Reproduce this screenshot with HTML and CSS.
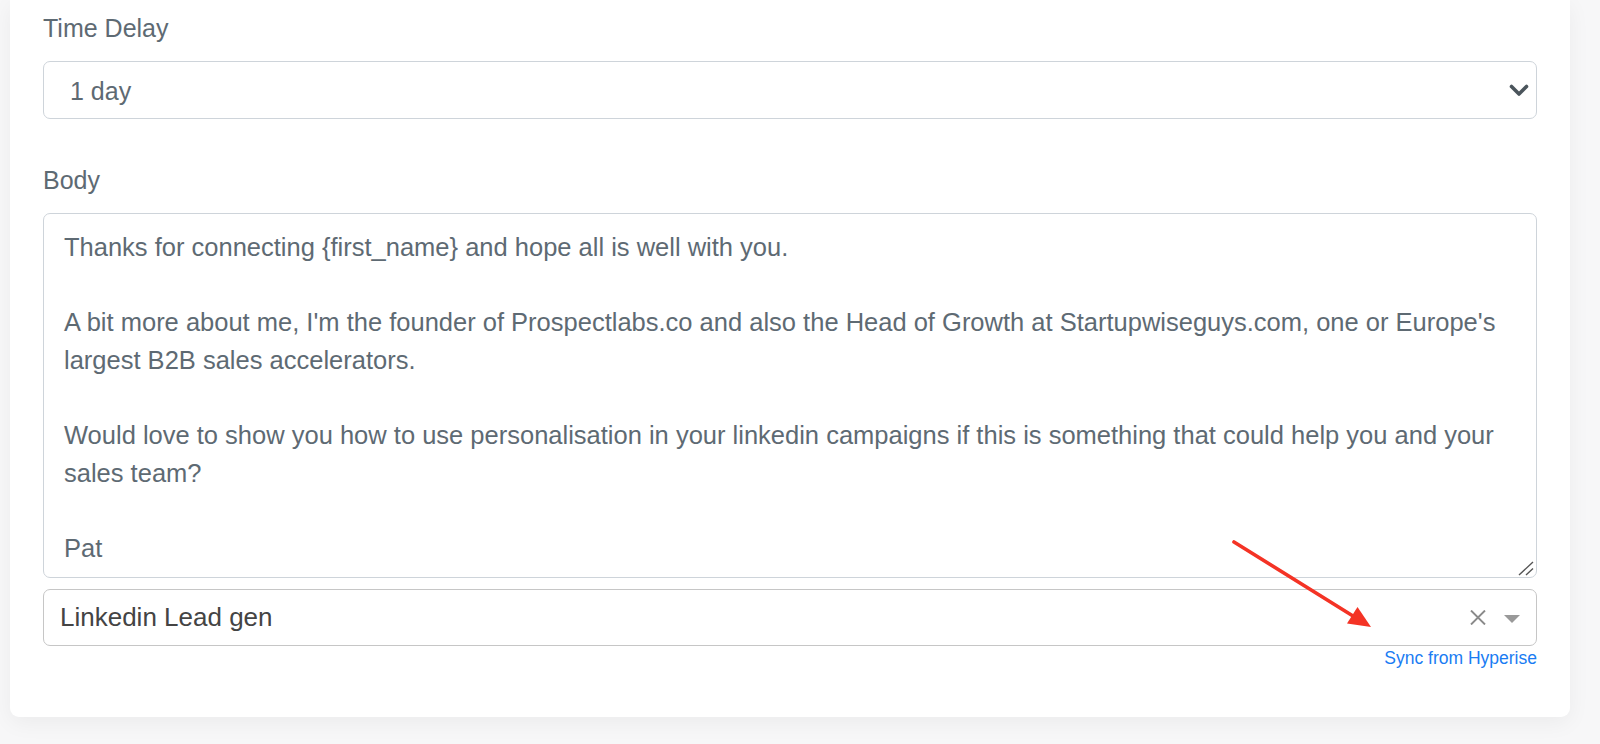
FILE: index.html
```html
<!DOCTYPE html>
<html lang="en">
<head>
<meta charset="utf-8">
<title>Step editor</title>
<link rel="stylesheet" href="styles.css">
</head>
<body>
<div class="page">
  <div class="card">
    <div class="field">
      <label class="label">Time Delay</label>
      <div class="select">
        <span class="select-value">1 day</span>
        <svg class="chevron" width="20" height="13" viewBox="0 0 20 13"><path d="M2.5 2.5 L10 10 L17.5 2.5" fill="none" stroke="#4b555c" stroke-width="3.6" stroke-linecap="round" stroke-linejoin="round"/></svg>
      </div>
    </div>
    <div class="field body-field">
      <label class="label">Body</label>
      <div class="textarea">
        <div class="textarea-text">Thanks for connecting {first_name} and hope all is well with you.

A bit more about me, I'm the founder of Prospectlabs.co and also the Head of Growth at Startupwiseguys.com, one or Europe's largest B2B sales accelerators.

Would love to show you how to use personalisation in your linkedin campaigns if this is something that could help you and your sales team?

Pat</div>
        <svg class="grip" width="16" height="15" viewBox="0 0 16 15"><path d="M1 14 L15 1 M8 14 L15 7.5" stroke="#555" stroke-width="1.4" fill="none"/></svg>
      </div>
      <div class="select2">
        <span class="select2-value">Linkedin Lead gen</span>
        <span class="select2-actions">
          <svg class="clear" width="16" height="15" viewBox="0 0 16 15"><path d="M1 0.5 L15 14.5 M15 0.5 L1 14.5" stroke="#8a8a8a" stroke-width="1.9" fill="none"/></svg>
          <svg class="caret" width="16" height="8" viewBox="0 0 16 8"><path d="M0 0 L16 0 L8 8 Z" fill="#999"/></svg>
        </span>
      </div>
      <div class="sync-row"><a class="sync" href="#">Sync from Hyperise</a></div>
    </div>
    <svg class="arrow" width="150" height="100" viewBox="0 0 150 100">
      <line x1="6" y1="6" x2="125" y2="80" stroke="#f43325" stroke-width="3.6" stroke-linecap="round"/>
      <path d="M143 91 L119 87.5 L129.5 71 Z" fill="#f43325"/>
    </svg>
  </div>
</div>
</body>
</html>
```
FILE: styles.css
```css
html, body {
  margin: 0;
  padding: 0;
}
body {
  background: #f7f7f8;
  font-family: "Liberation Sans", Arial, Helvetica, sans-serif;
  overflow: hidden;
}
.page {
  width: 1600px;
  height: 744px;
  padding-left: 10px;
  box-sizing: border-box;
}
.card {
  position: relative;
  width: 1560px;
  height: 717px;
  background: #fff;
  border-radius: 0 0 9px 9px;
  box-shadow: 0 6px 22px rgba(0, 0, 0, 0.05);
  padding: 13px 33px 0 33px;
  box-sizing: border-box;
}
.field {
  display: flex;
  flex-direction: column;
}
.label {
  color: #5e6a73;
  font-size: 25px;
  line-height: 30px;
  margin-bottom: 18px;
}
.select {
  height: 58px;
  border: 1px solid #ced4da;
  border-radius: 7px;
  box-sizing: border-box;
  display: flex;
  align-items: center;
  justify-content: space-between;
  padding: 2px 7px 0 26px;
}
.select-value {
  color: #5e6a73;
  font-size: 25px;
}
.chevron {
  display: block;
  margin-top: -1px;
}
.body-field {
  margin-top: 46px;
}
.body-field .label {
  margin-bottom: 18px;
}
.textarea {
  position: relative;
  height: 365px;
  border: 1px solid #ced4da;
  border-radius: 7px;
  box-sizing: border-box;
  padding: 15px 20px 0 20px;
}
.textarea-text {
  white-space: pre-wrap;
  color: #5e6a73;
  font-size: 25.5px;
  line-height: 37.6px;
}
.grip {
  position: absolute;
  right: 2px;
  bottom: 1px;
}
.select2 {
  margin-top: 11px;
  height: 57px;
  border: 1px solid #c6c6c6;
  border-radius: 7px;
  box-sizing: border-box;
  display: flex;
  align-items: center;
  justify-content: space-between;
  padding: 0 16px 0 16px;
}
.select2-value {
  color: #444;
  font-size: 26px;
}
.select2-actions {
  display: flex;
  align-items: center;
  gap: 18px;
}
.clear {
  display: block;
}
.caret {
  display: block;
  margin-top: 2px;
}
.sync-row {
  display: flex;
  justify-content: flex-end;
  margin-top: 2px;
}
.sync {
  color: #1a7cf3;
  font-size: 17.5px;
  line-height: 21px;
  text-decoration: none;
}
.arrow {
  position: absolute;
  left: 1218px;
  top: 536px;
}
```
